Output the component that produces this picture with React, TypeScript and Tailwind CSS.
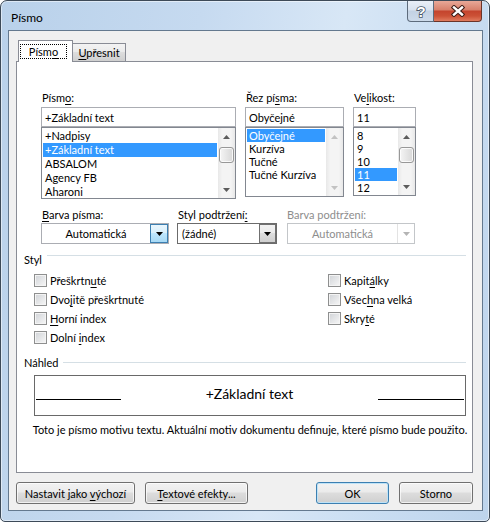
import React from "react";

const UI = "font-['Lato','Liberation_Sans',Arial,sans-serif] text-[11px] leading-[15px] text-black";

function U({ children }: { children: React.ReactNode }) {
  return <span className="underline underline-offset-[2px]">{children}</span>;
}

function Arrow({ dir, color }: { dir: "up" | "down"; color: string }) {
  return (
    <svg width="7" height="4" viewBox="0 0 7 4">
      <path d={dir === "up" ? "M0 4L3.5 0L7 4Z" : "M0 0L7 0L3.5 4Z"} fill={color} />
    </svg>
  );
}

function ScrollBar({ thumb, disabled }: { thumb?: boolean; disabled?: boolean }) {
  const c = disabled ? "#c2c2c2" : "#5c5c5c";
  return (
    <div className="flex w-[17px] shrink-0 flex-col bg-[linear-gradient(90deg,#e8e8e8,#f4f4f4_25%,#f4f4f4_75%,#e8e8e8)]">
      <div className="flex h-[17px] items-center justify-center">
        <Arrow dir="up" color={c} />
      </div>
      <div className="flex-1 px-px pt-[2px]">
        {thumb && (
          <div className="h-[16px] rounded-[3px] border border-[#989898] bg-[linear-gradient(90deg,#f5f5f5,#e6e6e6_50%,#d8d8d8)] shadow-[inset_0_0_0_1px_rgba(255,255,255,0.8)]" />
        )}
      </div>
      <div className="flex h-[17px] items-center justify-center">
        <Arrow dir="down" color={c} />
      </div>
    </div>
  );
}

type PickProps = {
  label: React.ReactNode;
  value: string;
  items: string[];
  selected: number;
  width: string;
  listH: string;
  rowH: string;
  thumb?: boolean;
  disabledScroll?: boolean;
};

function PickCol({ label, value, items, selected, width, listH, rowH, thumb, disabledScroll }: PickProps) {
  return (
    <div className={`flex shrink-0 flex-col ${width}`}>
      <div className="h-[15px] pl-px">{label}</div>
      <div className="mt-[2px] flex h-[20px] items-center border border-[#abadb3] bg-white pl-[3px]">{value}</div>
      <div className={`flex border border-[#828790] bg-white ${listH}`}>
        <div className="min-w-0 flex-1 overflow-hidden p-px">
          {items.map((it, i) => (
            <div
              key={it}
              className={`flex items-center whitespace-nowrap pl-[2px] ${rowH} ${i === selected ? "bg-[#3399ff] text-white" : ""}`}
            >
              {it}
            </div>
          ))}
        </div>
        <ScrollBar thumb={thumb} disabled={disabledScroll} />
      </div>
    </div>
  );
}

function Combo({ width, text, kind }: { width: string; text: string; kind: "blue" | "dark" | "off" }) {
  const box =
    kind === "blue" ? "border-[#abadb3]" : kind === "dark" ? "border-[#6b6b6b]" : "border-[#c3c6c9]";
  const btn =
    kind === "blue"
      ? "w-[18px] border border-[#3c7fb1] bg-[linear-gradient(180deg,#eaf6fd,#d9f0fc_45%,#bee6fd_50%,#a7d9f5)]"
      : kind === "dark"
      ? "w-[17px] border border-[#707070] bg-[linear-gradient(180deg,#f2f2f2,#ebebeb_45%,#dddddd_50%,#cfcfcf)]"
      : "w-[17px] border-l border-[#e3e3e3]";
  return (
    <div className={`flex h-[21px] shrink-0 border bg-white ${box} ${width}`}>
      <div
        className={`flex min-w-0 flex-1 items-center whitespace-nowrap ${
          kind === "dark" ? "pl-[4px]" : "justify-center"
        } ${kind === "off" ? "text-[#8d8d8d]" : ""}`}
      >
        {text}
      </div>
      <div className={`flex items-center justify-center ${btn}`}>
        <Arrow dir="down" color={kind === "off" ? "#b4b4b4" : "#000"} />
      </div>
    </div>
  );
}

function Check({ label }: { label: React.ReactNode }) {
  return (
    <div className="flex h-[19px] items-center">
      <div className="h-[13px] w-[13px] shrink-0 border border-[#8e8f8f] bg-[linear-gradient(135deg,#d0d3d7,#f7f7f7)] shadow-[inset_0_0_0_1px_#f4f4f4]" />
      <span className="ml-[3px] whitespace-nowrap">{label}</span>
    </div>
  );
}

function Header({ title, lineTop }: { title: string; lineTop: string }) {
  return (
    <div className="mr-[6px] ml-[7px] flex h-[15px]">
      <span>{title}</span>
      <div className={`ml-[5px] h-px flex-1 bg-[#d5dfe5] ${lineTop}`} />
    </div>
  );
}

function Button({ width, children, primary }: { width: string; children: React.ReactNode; primary?: boolean }) {
  return (
    <div
      className={`flex h-[22px] shrink-0 items-center justify-center rounded-[3px] border bg-[linear-gradient(180deg,#f2f2f2,#ebebeb_45%,#dddddd_50%,#cfcfcf)] ${
        primary
          ? "border-[#3c7fb1] shadow-[inset_0_0_0_1px_#bfe3f7]"
          : "border-[#707070] shadow-[inset_0_0_0_1px_rgba(255,255,255,0.7)]"
      } ${width}`}
    >
      <span className="whitespace-nowrap">{children}</span>
    </div>
  );
}

export default function App() {
  return (
    <div className="h-[522px] w-[490px] bg-white">
      <div
        className={`flex h-[522px] w-[490px] flex-col rounded-t-[7px] rounded-b-[5px] border border-[#3d4a58] bg-[linear-gradient(100deg,#b9d1ea_0%,#c6daf0_35%,#d8e7f6_60%,#c9ddf2_80%,#bdd4ec_100%)] shadow-[inset_0_0_0_1px_rgba(255,255,255,0.5)] ${UI}`}
      >
        {/* title bar */}
        <div className="flex h-[29px] items-start justify-between">
          <span className="mt-[9px] ml-[10px] text-[12px]">Písmo</span>
          <div className="mr-[7px] flex">
            <div className="flex h-[21px] w-[27px] items-center justify-center rounded-bl-[4px] border border-t-0 border-[#5d6b7c] bg-[linear-gradient(180deg,#e9eff7,#d8e2ef_45%,#c3d2e4_50%,#cddbeb)]">
              <svg width="12" height="15" viewBox="0 0 12 15">
                <text
                  x="6"
                  y="13"
                  textAnchor="middle"
                  fontSize="15"
                  fontWeight="bold"
                  fontFamily="Liberation Sans, Arial, sans-serif"
                  fill="#fff"
                  stroke="#4a5868"
                  strokeWidth="1.6"
                  paintOrder="stroke"
                >
                  ?
                </text>
              </svg>
            </div>
            <div className="flex h-[21px] w-[48px] items-center justify-center rounded-br-[4px] border border-t-0 border-l-0 border-[#6b3429] bg-[linear-gradient(180deg,#e8a898,#d7806b_45%,#c4442d_50%,#cc5136_75%,#e07c5f)]">
              <svg width="14" height="12" viewBox="0 0 14 12">
                <path d="M3 2.5L11 9.5M11 2.5L3 9.5" stroke="#3b1b15" strokeWidth="4.4" strokeLinecap="square" />
                <path d="M3 2.5L11 9.5M11 2.5L3 9.5" stroke="#fff" strokeWidth="2.4" strokeLinecap="square" />
              </svg>
            </div>
          </div>
        </div>

        {/* client area */}
        <div className="ml-[7px] flex h-[481px] w-[475px] flex-col border border-[#64798f] bg-[#f0f0f0] pt-[9px]">
          <div className="flex h-[21px] items-end pl-[9px]">
            <div className="relative z-10 -mb-px flex h-[22px] w-[55px] justify-start border border-b-0 border-[#898c95] bg-white pt-[3px] pl-px">
              <div className="flex h-[15px] w-[47px] items-center justify-center border border-dotted border-black">
                <span>
                  Písm<U>o</U>
                </span>
              </div>
            </div>
            <div className="flex h-[18px] w-[53px] items-center justify-center border border-b-0 border-l-0 border-[#898c95] bg-[linear-gradient(180deg,#f3f3f3,#ebebeb_45%,#dddddd_50%,#cfcfcf)]">
              <span>
                <U>U</U>přesnit
              </span>
            </div>
          </div>

          {/* tab page */}
          <div className="ml-[7px] flex h-[412px] w-[457px] flex-col border border-[#898c95] bg-white">
            <div className="mt-[28px] ml-[24px] flex gap-[9px]">
              <PickCol
                label={<>Písm<U>o</U>:</>}
                value="+Základní text"
                items={["+Nadpisy", "+Základní text", "ABSALOM", "Agency FB", "Aharoni"]}
                selected={1}
                width="w-[195px]"
                listH="h-[72px]"
                rowH="h-[14px] leading-[14px]"
                thumb
              />
              <PickCol
                label={<>Řez pí<U>s</U>ma:</>}
                value="Obyčejné"
                items={["Obyčejné", "Kurzíva", "Tučné", "Tučné Kurzíva"]}
                selected={0}
                width="w-[99px]"
                listH="h-[70px]"
                rowH="h-[13px] leading-[13px]"
                disabledScroll
              />
              <PickCol
                label={<>Ve<U>l</U>ikost:</>}
                value="11"
                items={["8", "9", "10", "11", "12"]}
                selected={3}
                width="w-[63px]"
                listH="h-[69px]"
                rowH="h-[13px] leading-[13px]"
                thumb
              />
            </div>

            <div className="mt-[8px] ml-[24px] flex">
              <div className="flex flex-col">
                <div className="h-[15px] pl-px">
                  <U>B</U>arva písma:
                </div>
                <div className="mt-px">
                  <Combo width="w-[128px]" text="Automatická" kind="blue" />
                </div>
              </div>
              <div className="ml-[8px] flex flex-col">
                <div className="h-[15px] pl-px">
                  Styl podtržení<U>:</U>
                </div>
                <div className="mt-px">
                  <Combo width="w-[100px]" text="(žádné)" kind="dark" />
                </div>
              </div>
              <div className="ml-[10px] flex flex-col">
                <div className="h-[15px] text-[#8d8d8d]">Barva podtržení:</div>
                <div className="mt-px">
                  <Combo width="w-[128px]" text="Automatická" kind="off" />
                </div>
              </div>
            </div>

            <div className="mt-[8px]">
              <Header title="Styl" lineTop="mt-[3px]" />
            </div>

            <div className="mt-[4px] ml-[17px] flex">
              <div className="flex w-[294px] flex-col">
                <Check label={<>Přeškrtn<U>u</U>té</>} />
                <Check label={<>Dvo<U>j</U>itě přeškrtnuté</>} />
                <Check label={<><U>H</U>orní index</>} />
                <Check label={<>Dolní <U>i</U>ndex</>} />
              </div>
              <div className="flex flex-col">
                <Check label={<>Kapit<U>á</U>lky</>} />
                <Check label={<>Všec<U>h</U>na velká</>} />
                <Check label={<>Skry<U>t</U>é</>} />
              </div>
            </div>

            <div className="mt-[8px]">
              <Header title="Náhled" lineTop="mt-[7px]" />
            </div>

            <div className="mt-[5px] ml-[17px] flex h-[41px] w-[432px] border border-[#696969] bg-white">
              <div className="mt-[23px] ml-px h-px w-[85px] bg-black" />
              <div className="mt-[8px] flex-1 text-center font-['Lato',sans-serif] text-[14px] leading-[20px]">
                +Základní text
              </div>
              <div className="mt-[23px] mr-px h-px w-[86px] bg-black" />
            </div>

            <div className="mt-[6px] ml-[17px] flex w-[432px] justify-center whitespace-nowrap">
              <span>Toto je písmo motivu textu. Aktuální motiv dokumentu definuje, které písmo bude použito.</span>
            </div>
          </div>

          {/* buttons */}
          <div className="mt-[9px] flex pr-[9px] pl-[7px]">
            <Button width="w-[119px]">
              Nastavit jako <U>v</U>ýchozí
            </Button>
            <div className="ml-[10px]">
              <Button width="w-[103px]">
                <U>T</U>extové efekty...
              </Button>
            </div>
            <div className="flex-1" />
            <Button width="w-[73px]" primary>
              OK
            </Button>
            <div className="ml-[10px]">
              <Button width="w-[74px]">Storno</Button>
            </div>
          </div>
        </div>
      </div>
    </div>
  );
}
